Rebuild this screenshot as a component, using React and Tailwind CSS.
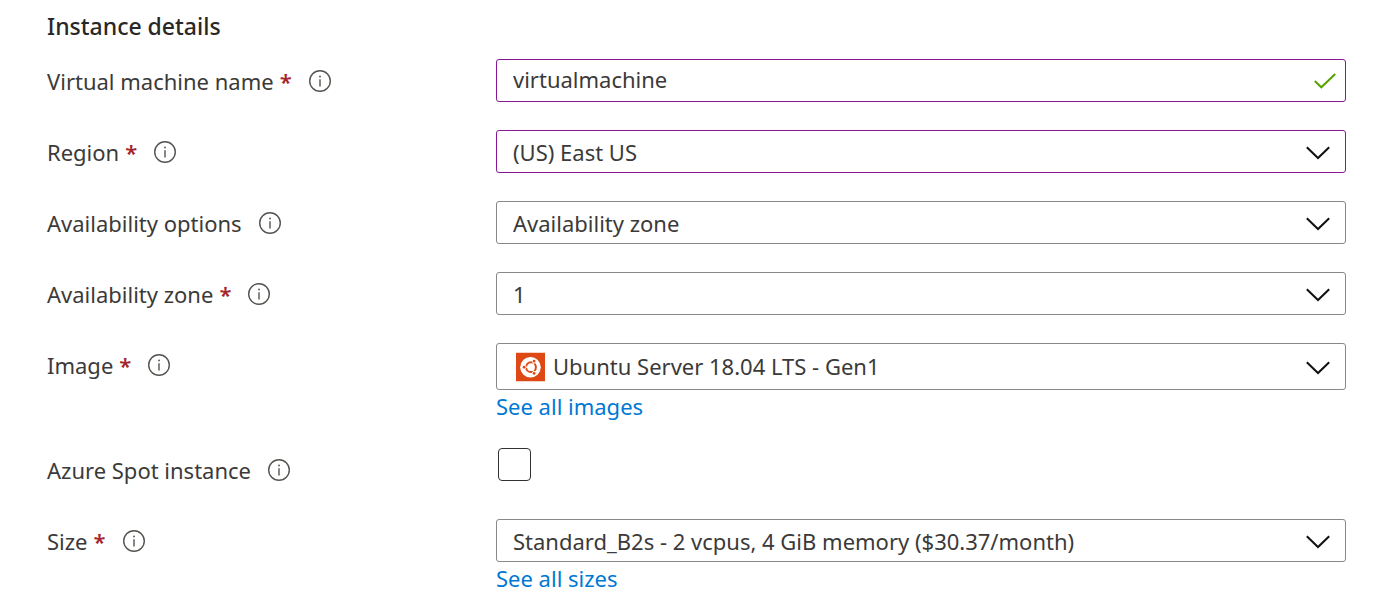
import React from "react";

function InfoIcon() {
  return (
    <svg className="ml-4 size-6 shrink-0 text-[#55534f]" viewBox="0 0 24 24" fill="none" stroke="currentColor" role="img" aria-label="More information">
      <circle cx="12" cy="12" r="10.3" strokeWidth="1.4" />
      <path d="M12 10.2v7.2" strokeWidth="1.4" />
      <circle cx="12" cy="7.5" r="0.9" fill="currentColor" stroke="none" />
    </svg>
  );
}

function Chevron() {
  return (
    <svg className="pointer-events-none absolute right-4 top-1/2 h-4 w-6 -translate-y-1/2" viewBox="0 0 24 16" fill="none" stroke="#111" strokeWidth="2" aria-hidden="true">
      <path d="M0.8 3.3 12 14 23.2 3.3" />
    </svg>
  );
}

function UbuntuLogo() {
  return (
    <svg className="pointer-events-none absolute left-5 top-1/2 size-[29px] -translate-y-1/2" viewBox="0 0 29 29" aria-hidden="true">
      <rect width="29" height="29" fill="#dd4814" />
      <circle cx="14.5" cy="14.7" r="10.3" fill="#fff" />
      <circle cx="15" cy="14.7" r="4.9" fill="none" stroke="#dd4814" strokeWidth="2" />
      <path d="M15 14.7H8M15 14.7l4-6.6M15 14.7l4 6.6" stroke="#fff" strokeWidth="1" />
      <g fill="#dd4814" stroke="#fff" strokeWidth="0.9">
        <circle cx="8.1" cy="14.7" r="1.9" />
        <circle cx="18.1" cy="8.6" r="1.9" />
        <circle cx="18.1" cy="20.8" r="1.9" />
      </g>
    </svg>
  );
}

function Row({ id, label, required, children }) {
  return (
    <div className="grid grid-cols-[449px_minmax(0,1fr)] items-start">
      <div className="flex h-[43px] items-center">
        <label htmlFor={id}>
          {label}
          {required && <span className="ml-1.5 font-semibold text-[#a4262c]">*</span>}
        </label>
        <InfoIcon />
      </div>
      {children}
    </div>
  );
}

function Select({ id, value, className = "h-[43px] border-[#8a8886] pl-4", icon }) {
  return (
    <div className="relative">
      <select id={id} className={"block w-full appearance-none rounded-[3px] border bg-white pr-12 outline-none " + className}>
        <option>{value}</option>
      </select>
      {icon}
      <Chevron />
    </div>
  );
}

function MoreLink({ children }) {
  return (
    <div className="flex h-[30px] items-end">
      <a href="#" className="leading-7 text-[#0078d4]">{children}</a>
    </div>
  );
}

export default function App() {
  return (
    <main className="bg-white pl-[47px] pr-[53px] pt-3 font-['Noto_Sans',sans-serif] text-[22px] leading-7 text-[#3b3a39]">
      <h2 className="text-[23px] font-medium leading-7 text-[#292827]">Instance details</h2>
      <form className="mt-[19px] flex flex-col gap-7">
        <Row id="name" label="Virtual machine name" required>
          <div className="relative">
            <input id="name" type="text" defaultValue="virtualmachine" className="block h-[43px] w-full rounded-[3px] border border-[#881798] pb-1 pl-4 pr-12 outline-none" />
            <svg className="pointer-events-none absolute right-2.5 top-1/2 h-4 w-[22px] -translate-y-1/2" viewBox="0 0 22 16" fill="none" stroke="#57a300" strokeWidth="2" aria-hidden="true">
              <path d="M0.8 8 7.3 14.3 21.2 1" />
            </svg>
          </div>
        </Row>
        <Row id="region" label="Region" required>
          <Select id="region" value="(US) East US" className="h-[43px] border-[#881798] pl-4" />
        </Row>
        <Row id="options" label="Availability options">
          <Select id="options" value="Availability zone" />
        </Row>
        <Row id="zone" label="Availability zone" required>
          <Select id="zone" value="1" />
        </Row>
        <Row id="image" label="Image" required>
          <div>
            <Select id="image" value="Ubuntu Server 18.04 LTS - Gen1" className="h-[47px] border-[#8a8886] pb-0.5 pl-14" icon={<UbuntuLogo />} />
            <MoreLink>See all images</MoreLink>
          </div>
        </Row>
        <Row id="spot" label="Azure Spot instance">
          <input id="spot" type="checkbox" className="ml-0.5 block size-[33px] appearance-none rounded-[4px] border border-[#323130] bg-white checked:bg-[#0078d4]" />
        </Row>
        <Row id="size" label="Size" required>
          <div>
            <Select id="size" value="Standard_B2s - 2 vcpus, 4 GiB memory ($30.37/month)" />
            <MoreLink>See all sizes</MoreLink>
          </div>
        </Row>
      </form>
    </main>
  );
}
